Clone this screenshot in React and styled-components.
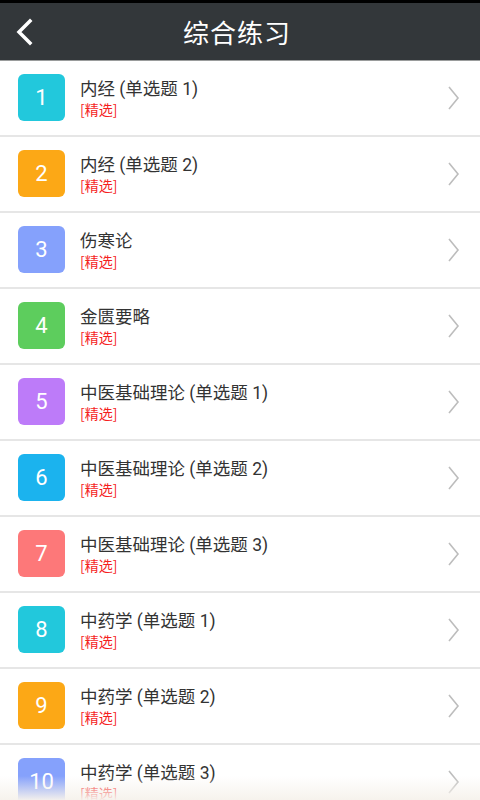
import React from 'react';
import styled, { createGlobalStyle } from 'styled-components';

const GlobalStyle = createGlobalStyle`
  html, body {
    margin: 0;
    padding: 0;
    background: #fff;
  }
  body {
    font-family: Roboto, "Noto Sans CJK SC", "Noto Sans", sans-serif;
  }
`;

const Screen = styled.div`
  position: relative;
  width: 480px;
  height: 800px;
  overflow: hidden;
  background: #fff;
`;

const Header = styled.div`
  display: flex;
  align-items: center;
  justify-content: center;
  position: relative;
  height: 57px;
  background: #33373a;
  border-top: 3px solid #000;
  border-bottom: 1px solid #9a9c9c;
`;

const BackButton = styled.div`
  position: absolute;
  left: 14px;
  top: 15px;
  width: 22px;
  height: 28px;
`;

const Title = styled.h1`
  margin: 0 0 0 -6px;
  color: #fff;
  font-size: 26px;
  font-weight: 400;
  letter-spacing: 1px;
  font-family: "Noto Sans CJK SC", sans-serif;
`;

const List = styled.div`
  display: flex;
  flex-direction: column;
`;

const Row = styled.div`
  display: flex;
  align-items: flex-start;
  height: 62px;
  padding: 12px 0 0 18px;
  border-bottom: 2px solid #e6e6e6;
`;

const Badge = styled.div`
  display: flex;
  align-items: center;
  justify-content: center;
  flex-shrink: 0;
  width: 47px;
  height: 47px;
  margin-top: 1px;
  border-radius: 6px;
  background: ${(p) => p.color};
  color: #fff;
  font-family: Roboto, sans-serif;
  font-size: 22px;
`;

const Info = styled.div`
  display: flex;
  flex-direction: column;
  flex: 1;
  margin-left: 15px;
  padding-top: 5px;
`;

const Name = styled.div`
  color: #333;
  font-size: 17.5px;
  line-height: 22px;
`;

const Tag = styled.div`
  color: #f51f1f;
  font-size: 14px;
  line-height: 18px;
  font-family: "Noto Sans CJK SC", sans-serif;
`;

const Chevron = styled.div`
  width: 12px;
  height: 24px;
  margin: 13px 20px 0 0;
`;

const Fade = styled.div`
  position: absolute;
  left: 0;
  right: 0;
  bottom: 0;
  height: 24px;
  background: linear-gradient(rgba(246, 242, 236, 0), rgba(246, 242, 236, 0.97));
  pointer-events: none;
`;

const items = [
  { n: 1, name: '内经 (单选题 1)', color: '#22c8dc' },
  { n: 2, name: '内经 (单选题 2)', color: '#fca816' },
  { n: 3, name: '伤寒论', color: '#85a1fc' },
  { n: 4, name: '金匮要略', color: '#5dcd5d' },
  { n: 5, name: '中医基础理论 (单选题 1)', color: '#bd7bf9' },
  { n: 6, name: '中医基础理论 (单选题 2)', color: '#1bb3ee' },
  { n: 7, name: '中医基础理论 (单选题 3)', color: '#fd7879' },
  { n: 8, name: '中药学 (单选题 1)', color: '#22c8dc' },
  { n: 9, name: '中药学 (单选题 2)', color: '#fca816' },
  { n: 10, name: '中药学 (单选题 3)', color: '#85a1fc' },
];

const App = () => {
  return (
    <Screen>
      <GlobalStyle />
      <Header>
        <BackButton>
          <svg width="22" height="28" viewBox="0 0 22 28">
            <polyline points="16,3 5,14 16,25" fill="none" stroke="#fff" strokeWidth="3.5" strokeLinecap="square" />
          </svg>
        </BackButton>
        <Title>综合练习</Title>
      </Header>
      <List>
        {items.map((item) => (
          <Row key={item.n}>
            <Badge color={item.color}>{item.n}</Badge>
            <Info>
              <Name>{item.name}</Name>
              <Tag>[精选]</Tag>
            </Info>
            <Chevron>
              <svg width="12" height="24" viewBox="0 0 12 24">
                <polyline points="1,1 10,12 1,23" fill="none" stroke="#bdbdbd" strokeWidth="1.6" />
              </svg>
            </Chevron>
          </Row>
        ))}
      </List>
      <Fade />
    </Screen>
  );
};

export default App;
